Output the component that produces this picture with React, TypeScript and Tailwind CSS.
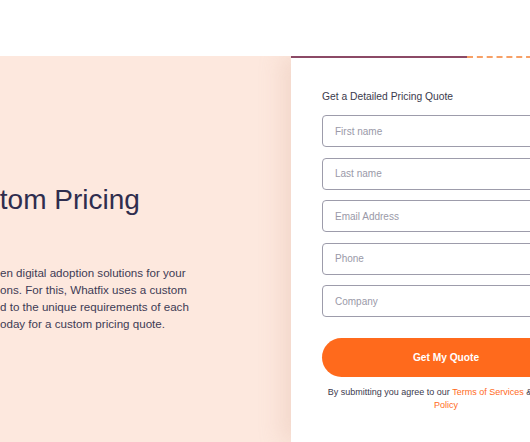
export default function App() {
  const fields = ["First name", "Last name", "Email Address", "Phone", "Company"];

  return (
    <div className="w-[530px] h-[442px] overflow-hidden bg-white font-['Liberation_Sans',Arial,sans-serif]">
      <div className="h-[56px]" />
      <div className="flex h-[386px] overflow-hidden bg-[#fde8de]">
        {/* left intro */}
        <div className="w-[291px] shrink-0 pt-[127px] text-[#2f2d4e]">
          <h1 className="-ml-[50px] whitespace-nowrap text-[28px] leading-[34px] font-normal">
            Custom Pricing
          </h1>
          <div className="mt-[47px] text-[11.6px] leading-[17px] text-[#3d3b55] whitespace-nowrap">
            <div>en digital adoption solutions for your</div>
            <div>ons. For this, Whatfix uses a custom</div>
            <div>d to the unique requirements of each</div>
            <div>oday for a custom pricing quote.</div>
          </div>
        </div>

        {/* form card */}
        <div className="w-[310px] shrink-0 bg-white shadow-[-10px_0_20px_rgba(214,170,150,0.25)]">
          <div className="flex h-[2px]">
            <div className="w-[176px] bg-[#8c4a66]" />
            <div className="flex-1 border-t-2 border-dashed border-[#f7a066]" />
          </div>
          <div className="px-[31px] pt-[32px]">
            <p className="text-[10.3px] leading-[14px] text-[#3b3a4d]">Get a Detailed Pricing Quote</p>
            <form className="mt-[11px] flex flex-col gap-[10.5px]">
              {fields.map((f) => (
                <input
                  key={f}
                  placeholder={f}
                  className="h-[32px] w-full rounded-[4px] border border-[#9d9cab] bg-white px-[12px] text-[10px] text-[#3b3a4d] placeholder:text-[#9a99a8] outline-none"
                />
              ))}
            </form>
            <button className="mt-[21px] h-[39px] w-full rounded-full bg-[#ff6a1c] text-[10.2px] font-bold text-white">
              Get My Quote
            </button>
            <p className="mt-[9px] text-center text-[9px] leading-[13px] text-[#3b3a4d]">
              By submitting you agree to our <span className="text-[#ff6a1c]">Terms of Services</span> &amp;{" "}
              <span className="text-[#ff6a1c]">Privacy Policy</span>
            </p>
          </div>
        </div>
      </div>
    </div>
  );
}
